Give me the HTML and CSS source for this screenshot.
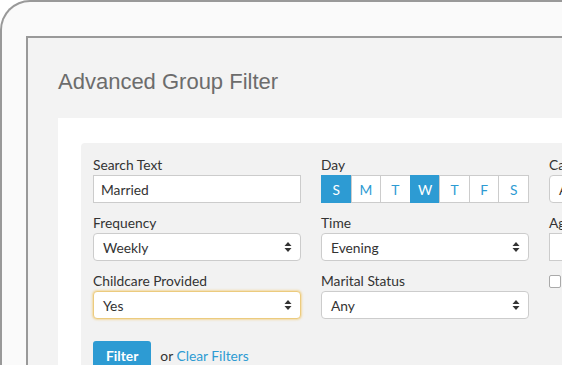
FILE: index.html
```html
<!DOCTYPE html>
<html lang="en">
  <head>
    <meta charset="UTF-8" />
    <meta name="viewport" content="width=device-width, initial-scale=1.0" />
    <title>Advanced Group Filter</title>
    <link rel="stylesheet" href="styles.css">
  </head>
  <body>
    <div class="device">
      <div class="screen">
        <h1 class="title">Advanced Group Filter</h1>
        <div class="panel">
          <div class="filters">
            <div class="grid">
              <div class="field">
                <label>Search Text</label>
                <div class="input">Married</div>
              </div>
              <div class="field">
                <label>Day</label>
                <div class="days">
                  <span class="day on">S</span>
                  <span class="day">M</span>
                  <span class="day">T</span>
                  <span class="day on">W</span>
                  <span class="day">T</span>
                  <span class="day">F</span>
                  <span class="day">S</span>
                </div>
              </div>
              <div class="field">
                <label>Campus</label>
                <div class="select">Any
                  <svg class="arrows" width="8" height="12" viewBox="0 0 8 12"><path d="M4 1 L7.5 5 L0.5 5 Z M4 11 L7.5 7 L0.5 7 Z" fill="#333"/></svg>
                </div>
              </div>

              <div class="field">
                <label>Frequency</label>
                <div class="select">Weekly
                  <svg class="arrows" width="8" height="12" viewBox="0 0 8 12"><path d="M4 1 L7.5 5 L0.5 5 Z M4 11 L7.5 7 L0.5 7 Z" fill="#333"/></svg>
                </div>
              </div>
              <div class="field">
                <label>Time</label>
                <div class="select">Evening
                  <svg class="arrows" width="8" height="12" viewBox="0 0 8 12"><path d="M4 1 L7.5 5 L0.5 5 Z M4 11 L7.5 7 L0.5 7 Z" fill="#333"/></svg>
                </div>
              </div>
              <div class="field">
                <label>Age Range</label>
                <div class="input"></div>
              </div>

              <div class="field">
                <label>Childcare Provided</label>
                <div class="select focus">Yes
                  <svg class="arrows" width="8" height="12" viewBox="0 0 8 12"><path d="M4 1 L7.5 5 L0.5 5 Z M4 11 L7.5 7 L0.5 7 Z" fill="#333"/></svg>
                </div>
              </div>
              <div class="field">
                <label>Marital Status</label>
                <div class="select">Any
                  <svg class="arrows" width="8" height="12" viewBox="0 0 8 12"><path d="M4 1 L7.5 5 L0.5 5 Z M4 11 L7.5 7 L0.5 7 Z" fill="#333"/></svg>
                </div>
              </div>
              <div class="field check">
                <span class="box"></span>
                <span>Has Openings</span>
              </div>
            </div>
            <div class="actions">
              <button class="btn">Filter</button>
              <span class="or">or <a href="#">Clear Filters</a></span>
            </div>
          </div>
        </div>
      </div>
    </div>
  </body>
</html>
```

FILE: styles.css
```css
html, body {
  margin: 0;
  height: 100%;
  overflow: hidden;
  background-color: #fff;
}
.device {
  width: 760px;
  height: 520px;
  border-top: 2px solid #999;
  border-left: 2px solid #999;
  border-top-left-radius: 30px;
  background-color: #fafafa;
  padding: 34px 0 0 24px;
  box-sizing: border-box;
}
.screen {
  height: 100%;
  border-top: 2px solid #999;
  border-left: 2px solid #999;
  background-color: #f3f3f3;
  padding: 32px 0 0 30px;
  box-sizing: border-box;
}
.title {
  margin: 0 0 24px;
  font-family: "Liberation Sans", Arial, sans-serif;
  font-size: 22px;
  line-height: 24px;
  font-weight: normal;
  color: #6c6c6c;
}
.panel {
  background-color: #fff;
  padding: 25px 0 0 23px;
  height: 300px;
}
.filters {
  background-color: #f2f2f2;
  border-radius: 4px 0 0 4px;
  padding: 14px 12px;
  font-family: Lato, "Open Sans", sans-serif;
  font-size: 13.8px;
  color: #333;
}
.grid {
  display: grid;
  grid-template-columns: repeat(3, 208px);
  column-gap: 20px;
  row-gap: 12px;
}
.field label {
  display: block;
  line-height: 15px;
  margin-bottom: 3px;
}
.input, .select {
  height: 28px;
  box-sizing: border-box;
  border: 1px solid #ccc;
  background: #fff;
  padding: 0 7px;
  display: flex;
  align-items: center;
  justify-content: space-between;
}
.select {
  border-radius: 4px;
  padding: 0 8px 0 9px;
}
.select.focus {
  border-color: #eccb7e;
  box-shadow: 0 0 2px 1px rgba(240, 200, 110, 0.6);
}
.arrows {
  display: block;
}
.days {
  display: flex;
  height: 28px;
}
.day {
  flex: 1;
  display: flex;
  align-items: center;
  justify-content: center;
  border: 1px solid #ccc;
  margin-left: -1px;
  background: #fff;
  color: #2d9bd3;
}
.day:first-child {
  margin-left: 0;
}
.day.on {
  background: #2d9bd3;
  border-color: #2d9bd3;
  color: #fff;
}
.check {
  display: flex;
  align-items: flex-start;
  gap: 6px;
  padding-top: 2px;
}
.box {
  width: 10px;
  height: 11px;
  border: 1px solid #aaa;
  border-radius: 2px;
  background: #fff;
  flex-shrink: 0;
}
.actions {
  margin-top: 22px;
  display: flex;
  align-items: center;
  gap: 9px;
}
.btn {
  font-family: Lato, "Open Sans", sans-serif;
  font-size: 13.8px;
  font-weight: bold;
  color: #fff;
  background: #2d9bd3;
  border: none;
  border-radius: 3px;
  height: 28px;
  padding: 0 13px;
}
.or a {
  color: #2d9bd3;
  text-decoration: none;
}
```
